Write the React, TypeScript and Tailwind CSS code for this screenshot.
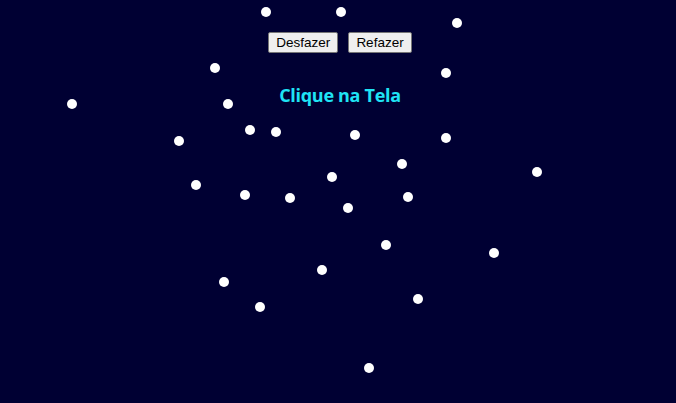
import React from "react";

const dots: [number, number][] = [
  [266, 12], [341, 12], [457, 23], [215, 68], [446, 73], [72, 104], [228, 104],
  [250, 130], [276, 132], [355, 135], [446, 138], [179, 141], [402, 164], [537, 172],
  [332, 177], [196, 185], [245, 195], [290, 198], [408, 197], [348, 208], [386, 245],
  [494, 253], [322, 270], [224, 282], [418, 299], [260, 307], [369, 368],
];

export default function App() {
  return (
    <div className="relative w-full h-[403px] overflow-hidden bg-[#000033]">
      {dots.map(([x, y], i) => (
        <div
          key={i}
          className="absolute w-[10px] h-[10px] rounded-full bg-white"
          style={{ left: x - 5, top: y - 5 }}
        />
      ))}
      <div className="relative flex flex-col items-center pl-1 pt-8">
        <div className="flex gap-[10px]">
          <button className="h-[21px] px-[7px] bg-[#efefef] border border-[#767676] rounded-[2px] text-[13.5px] text-black font-['Liberation_Sans',Arial,sans-serif] leading-none">
            Desfazer
          </button>
          <button className="h-[21px] px-[7px] bg-[#efefef] border border-[#767676] rounded-[2px] text-[13.5px] text-black font-['Liberation_Sans',Arial,sans-serif] leading-none">
            Refazer
          </button>
        </div>
        <div className="mt-[30px] text-[18px] leading-[24px] font-bold text-[#1fe3f5] font-['Open_Sans',sans-serif] tracking-[-0.3px]">
          Clique na Tela
        </div>
      </div>
    </div>
  );
}
